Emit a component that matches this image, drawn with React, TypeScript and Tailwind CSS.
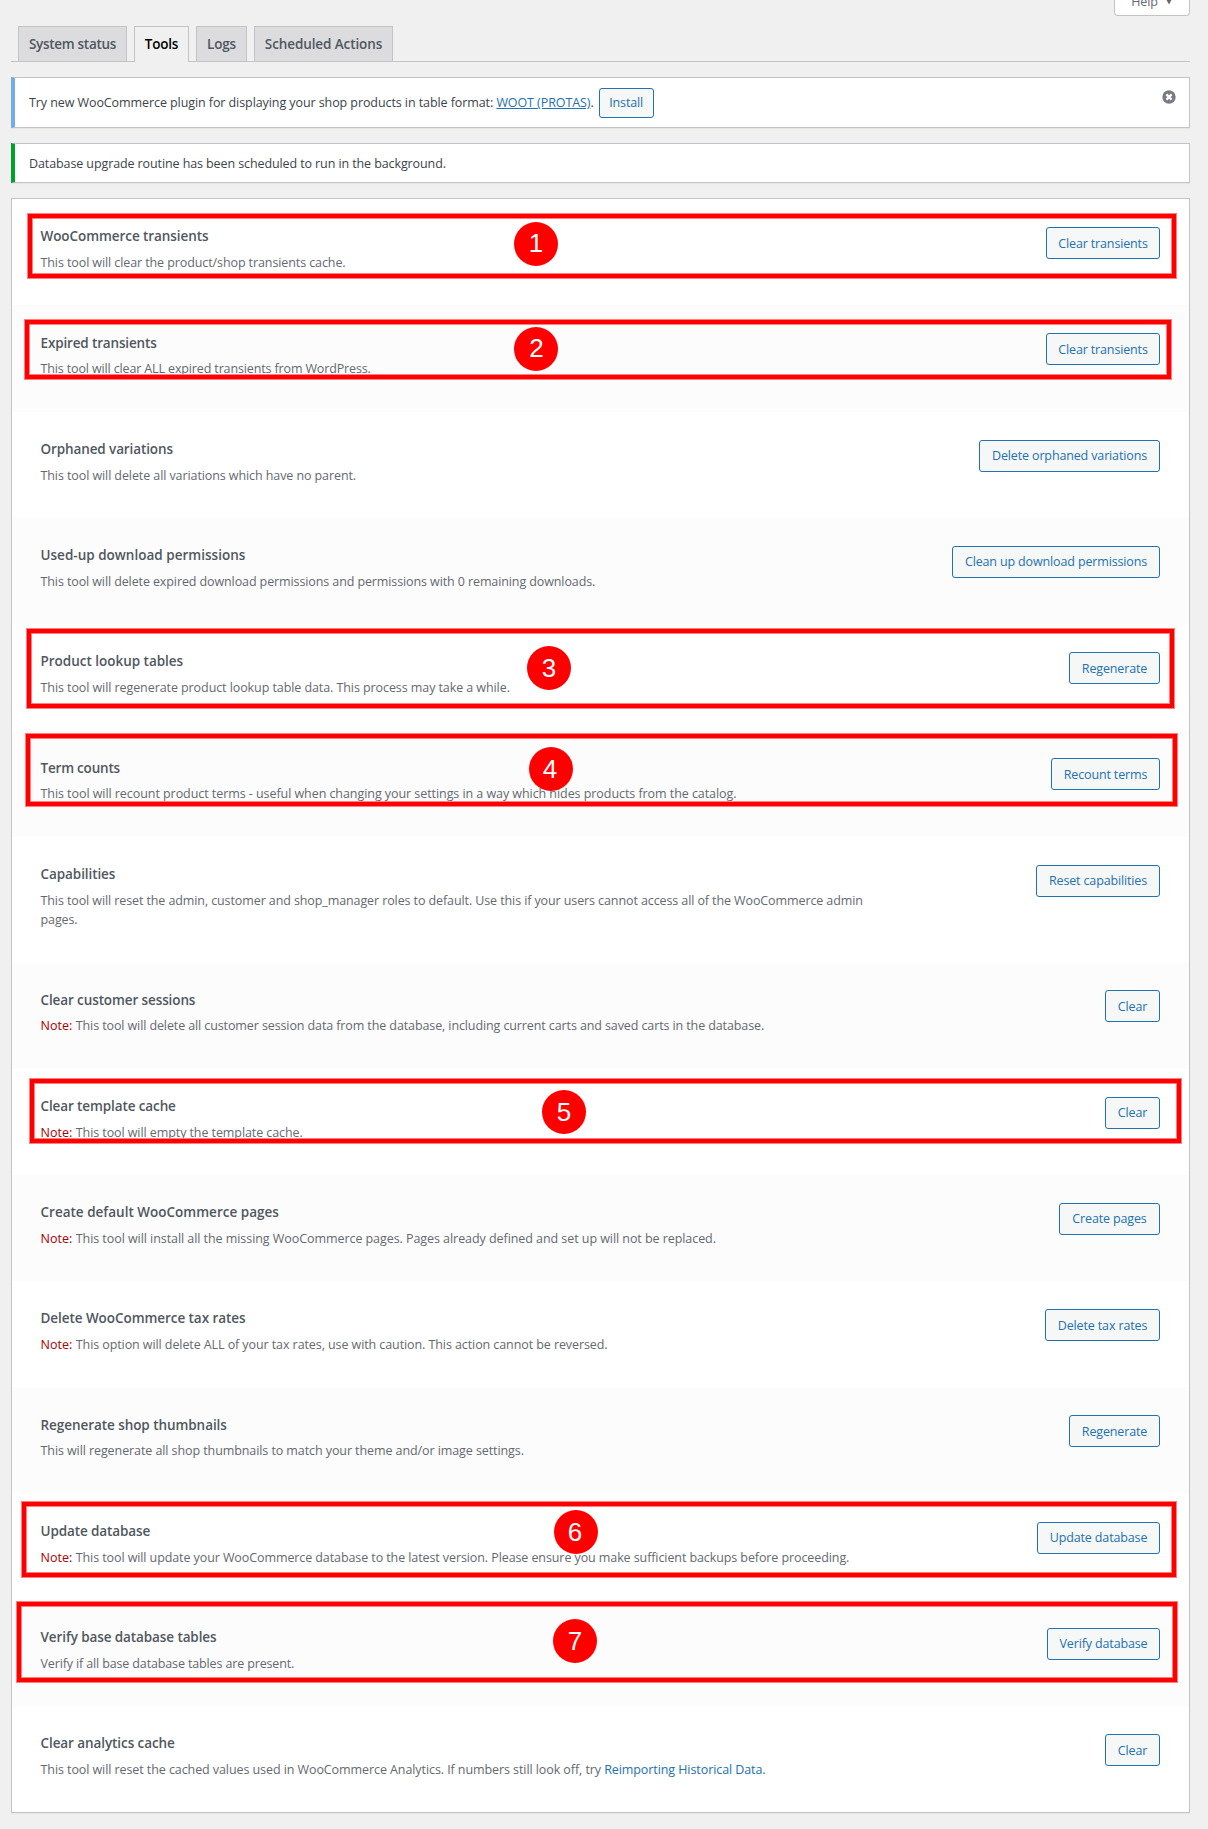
import type { ReactNode } from "react";

type Mark = { n: number; box: string; dot: string; digit?: string };
type Tool = {
  title: string;
  titleTrack?: string;
  desc: ReactNode;
  descTrack?: string;
  note?: boolean;
  action: string;
  actionWidth: string;
  mark?: Mark;
};

const tools: Tool[] = [
  {
    title: "WooCommerce transients",
    titleTrack: "tracking-[-0.07px]",
    desc: "This tool will clear the product/shop transients cache.",
    descTrack: "tracking-[-0.095px]",
    action: "Clear transients",
    actionWidth: "w-[114px]",
    mark: { n: 1, box: "left-[15px] top-[14px] w-[1150px] h-[66px]", dot: "left-[502px] top-[23px]", digit: "pb-[3px]" },
  },
  {
    title: "Expired transients",
    titleTrack: "tracking-[-0.15px]",
    desc: "This tool will clear ALL expired transients from WordPress.",
    descTrack: "tracking-[-0.135px]",
    action: "Clear transients",
    actionWidth: "w-[114px]",
    mark: { n: 2, box: "left-[12px] top-[13.75px] w-[1148px] h-[61px]", dot: "left-[502px] top-[21.75px]", digit: "pb-[3px] pl-px" },
  },
  {
    title: "Orphaned variations",
    titleTrack: "tracking-[-0.11px]",
    desc: "This tool will delete all variations which have no parent.",
    descTrack: "tracking-[-0.09px]",
    action: "Delete orphaned variations",
    actionWidth: "w-[181px]",
  },
  {
    title: "Used-up download permissions",
    titleTrack: "tracking-[0.01px]",
    desc: "This tool will delete expired download permissions and permissions with 0 remaining downloads.",
    action: "Clean up download permissions",
    actionWidth: "w-[208px]",
  },
  {
    title: "Product lookup tables",
    titleTrack: "tracking-[-0.02px]",
    desc: "This tool will regenerate product lookup table data. This process may take a while.",
    descTrack: "tracking-[-0.08px]",
    action: "Regenerate",
    actionWidth: "w-[91px]",
    mark: { n: 3, box: "left-[14px] top-[4px] w-[1149px] h-[81px]", dot: "left-[515px] top-[22px]" },
  },
  {
    title: "Term counts",
    titleTrack: "tracking-[-0.2px]",
    desc: "This tool will recount product terms - useful when changing your settings in a way which hides products from the catalog.",
    descTrack: "tracking-[-0.06px]",
    action: "Recount terms",
    actionWidth: "w-[109px]",
    mark: { n: 4, box: "left-[13px] top-[2.75px] w-[1153px] h-[74px]", dot: "left-[517px] top-[16.75px]", digit: "pr-[2px]" },
  },
  {
    title: "Capabilities",
    desc: (
      <>
        This tool will reset the admin, customer and shop_manager roles to default. Use this if your users cannot access all of the WooCommerce admin
        <br />
        pages.
      </>
    ),
    descTrack: "tracking-[-0.1px]",
    action: "Reset capabilities",
    actionWidth: "w-[124px]",
  },
  {
    title: "Clear customer sessions",
    titleTrack: "tracking-[-0.11px]",
    desc: "This tool will delete all customer session data from the database, including current carts and saved carts in the database.",
    note: true,
    action: "Clear",
    actionWidth: "w-[55px]",
  },
  {
    title: "Clear template cache",
    titleTrack: "tracking-[-0.11px]",
    desc: "This tool will empty the template cache.",
    descTrack: "tracking-[-0.08px]",
    note: true,
    action: "Clear",
    actionWidth: "w-[55px]",
    mark: { n: 5, box: "left-[17px] top-[9.5px] w-[1153px] h-[66px]", dot: "left-[530px] top-[21.5px]" },
  },
  {
    title: "Create default WooCommerce pages",
    titleTrack: "tracking-[0.005px]",
    desc: "This tool will install all the missing WooCommerce pages. Pages already defined and set up will not be replaced.",
    descTrack: "tracking-[-0.06px]",
    note: true,
    action: "Create pages",
    actionWidth: "w-[101px]",
  },
  {
    title: "Delete WooCommerce tax rates",
    titleTrack: "tracking-[-0.06px]",
    desc: "This option will delete ALL of your tax rates, use with caution. This action cannot be reversed.",
    descTrack: "tracking-[-0.085px]",
    note: true,
    action: "Delete tax rates",
    actionWidth: "w-[115px]",
  },
  {
    title: "Regenerate shop thumbnails",
    titleTrack: "tracking-[-0.06px]",
    desc: "This will regenerate all shop thumbnails to match your theme and/or image settings.",
    descTrack: "tracking-[-0.085px]",
    action: "Regenerate",
    actionWidth: "w-[91px]",
  },
  {
    title: "Update database",
    titleTrack: "tracking-[-0.11px]",
    desc: "This tool will update your WooCommerce database to the latest version. Please ensure you make sufficient backups before proceeding.",
    descTrack: "tracking-[-0.092px]",
    note: true,
    action: "Update database",
    actionWidth: "w-[123px]",
    mark: { n: 6, box: "left-[9px] top-[7.75px] w-[1156px] h-[77px]", dot: "left-[542px] top-[16.75px]", digit: "pr-[2px] pb-px" },
  },
  {
    title: "Verify base database tables",
    titleTrack: "tracking-[-0.1px]",
    desc: "Verify if all base database tables are present.",
    descTrack: "tracking-[-0.135px]",
    action: "Verify database",
    actionWidth: "w-[113px]",
    mark: { n: 7, box: "left-[4px] top-[1.5px] w-[1162px] h-[82px]", dot: "left-[541px] top-[19.5px]" },
  },
  {
    title: "Clear analytics cache",
    desc: (
      <>
        This tool will reset the cached values used in WooCommerce Analytics. If numbers still look off, try{" "}
        <a className="text-[#2271b1]">Reimporting Historical Data.</a>
      </>
    ),
    descTrack: "tracking-[-0.08px]",
    action: "Clear",
    actionWidth: "w-[55px]",
  },
];

const tabs = [
  { label: "System status", width: "w-[109px]", track: "tracking-[-0.3px]" },
  { label: "Tools", width: "w-[55px]", track: "tracking-[-0.2px]", active: true },
  { label: "Logs", width: "w-[51px]", track: "tracking-[-0.2px]" },
  { label: "Scheduled Actions", width: "w-[139px]", track: "tracking-[-0.1px]" },
];

function Button({ children, size }: { children: ReactNode; size: string }) {
  return (
    <button
      className={`${size} flex shrink-0 items-center justify-center whitespace-nowrap rounded-[3px] border border-[#2271b1] bg-[#f6f7f7] pt-[1px] text-[12.5px] leading-[20px] tracking-[-0.14px] text-[#2271b1]`}
    >
      {children}
    </button>
  );
}

function Annotation({ mark }: { mark: Mark }) {
  return (
    <>
      <div className={`absolute z-10 border border-[#ff8080] ${mark.box}`}>
        <div className="h-full w-full border-4 border-[#ff0000]">
          <div className="h-full w-full border border-[#ff8080]" />
        </div>
      </div>
      <div
        className={`absolute z-10 flex size-[44px] items-center justify-center rounded-full bg-[#ff0000] font-['Liberation_Sans',Arial,sans-serif] text-[26px] leading-none text-white ${mark.dot} ${mark.digit ?? ""}`}
      >
        {mark.n}
      </div>
    </>
  );
}

export default function App() {
  return (
    <div className="h-[1829px] w-[1208px] overflow-hidden bg-[#f0f0f1] pl-[11px] pr-[18px] font-['Open_Sans','Noto_Sans',sans-serif] text-[12.5px] tracking-[-0.1px] text-[#3c434a]">
      <div className="flex h-[26px] items-start justify-end">
        <button className="flex h-[16px] w-[76px] items-end justify-center gap-[7px] rounded-b-[4px] border border-t-0 border-[#c3c4c7] bg-white pb-[3.5px] leading-[20px] text-[#646970]">
          Help
          <svg width="8" height="7" viewBox="0 0 8 7" className="mb-[6.5px]">
            <path d="M1 1h6L4 6.5z" fill="#646970" />
          </svg>
        </button>
      </div>

      <nav className="flex h-[36px] gap-[7px] border-b border-[#c3c4c7] pl-[7px]">
        {tabs.map((t) => (
          <a
            key={t.label}
            className={`flex items-center justify-center whitespace-nowrap border border-b-0 border-[#c3c4c7] text-[13.5px] font-semibold ${t.width} ${t.track} ${
              t.active ? "-mb-px h-[36px] bg-[#f0f0f1] text-black" : "h-[35px] bg-[#dcdcde] pt-px text-[#50575e]"
            }`}
          >
            {t.label}
          </a>
        ))}
      </nav>

      <div className="mt-[15px] flex h-[51px] justify-between border border-l-4 border-[#c3c4c7] border-l-[#72aee6] bg-white pl-[14px] pr-[13px] shadow-[0_1px_1px_rgba(0,0,0,0.04)]">
        <div className="flex items-center whitespace-nowrap">
          <span className="pt-[2px] tracking-[-0.08px]">
            Try new WooCommerce plugin for displaying your shop products in table format:{" "}
            <a className="text-[#2271b1] underline">WOOT (PROTAS)</a>.
          </span>
          <span className="ml-[5px] flex">
            <Button size="h-[30px] w-[55px]">Install</Button>
          </span>
        </div>
        <svg width="14" height="14" viewBox="0 0 14 14" className="mt-[12px]">
          <circle cx="7" cy="7" r="6.7" fill="#787c82" />
          <path d="M4.4 4.4l5.2 5.2M9.6 4.4l-5.2 5.2" stroke="#fff" strokeWidth="2.3" />
        </svg>
      </div>

      <div className="mt-[15px] flex h-[40px] items-center border border-l-4 border-[#c3c4c7] border-l-[#00a32a] bg-white pl-[14px] pt-[2px] shadow-[0_1px_1px_rgba(0,0,0,0.04)]">
        Database upgrade routine has been scheduled to run in the background.
      </div>

      <main className="mt-[15px] h-[1615px] border border-[#c3c4c7] bg-white shadow-[0_1px_1px_rgba(0,0,0,0.04)]">
        {tools.map((t, i) => (
          <section
            key={t.title}
            className={`relative flex justify-between pl-[28.5px] pr-[29px] ${i === 6 ? "h-[125.75px]" : "h-[106.25px]"} ${
              i % 2 ? "bg-[#fcfcfc]" : "bg-white"
            }`}
          >
            <div className="whitespace-nowrap pt-[27.4px]">
              <h2 className={`text-[13.5px] font-semibold leading-[20px] text-[#50575e] ${t.titleTrack ?? "tracking-[-0.08px]"}`}>{t.title}</h2>
              <p className={`mt-[6.8px] leading-[19px] text-[#646970] ${t.descTrack ?? "tracking-[-0.105px]"}`}>
                {t.note && <strong className="font-medium tracking-[0.05px] text-[#a00]">Note: </strong>}
                {t.desc}
              </p>
            </div>
            <div className="flex items-start pt-[28.2px]">
              <Button size={`h-[32px] ${t.actionWidth}`}>{t.action}</Button>
            </div>
            {t.mark && <Annotation mark={t.mark} />}
          </section>
        ))}
      </main>
    </div>
  );
}
